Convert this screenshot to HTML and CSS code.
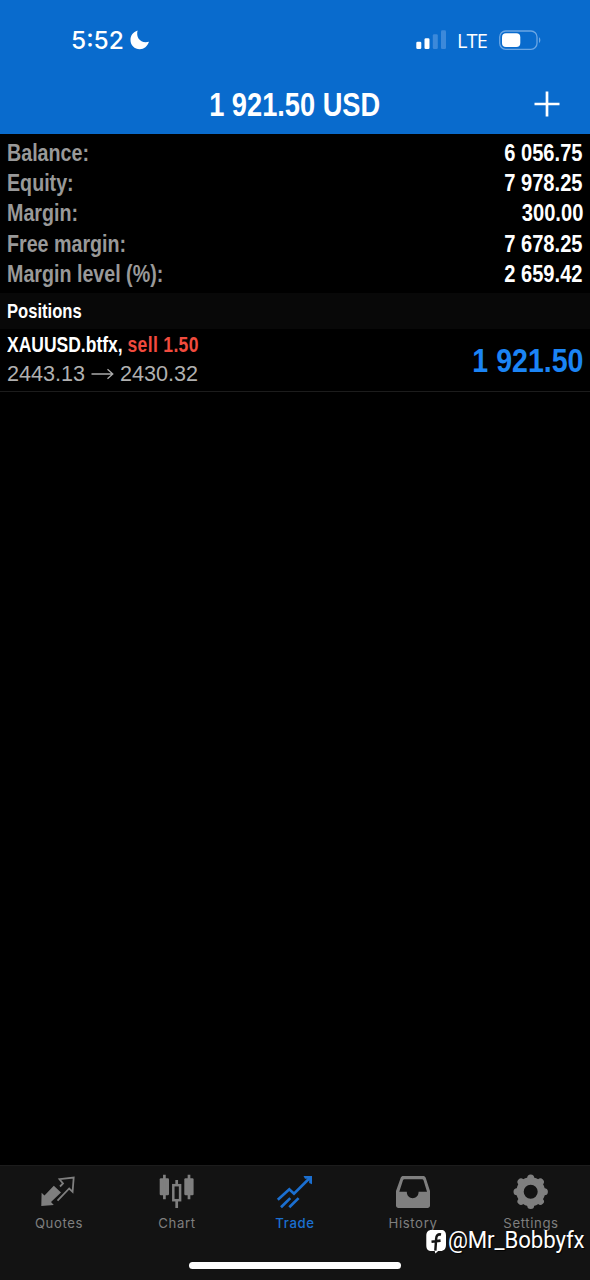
FILE: index.html
```html
<!DOCTYPE html>
<html lang="en">

<head>
  <meta charset="UTF-8">
  <meta name="viewport" content="width=device-width, initial-scale=1.0">
  <title>Trade</title>
  <link rel="stylesheet" href="styles.css">
</head>

<body>
  <header>
    <!-- Status bar -->
    <div class="status">
      <span class="time">5:52</span>
      <svg class="moon" width="20" height="20" viewBox="0 0 20 20">
        <path d="M7.6 0.6C5.6 7.9 10.8 14 19 11.8C17.5 16.3 14 19.2 9.8 19.2C4.5 19.2 0.5 15.2 0.5 10C0.5 5.6 3.2 2 7.6 0.6Z" fill="#fff" />
      </svg>
      <svg class="signal" width="31" height="20" viewBox="0 0 31 20">
        <rect x="0.3" y="11.7" width="5" height="7.3" rx="1.3" fill="#fff" />
        <rect x="8.5" y="8.3" width="5" height="10.7" rx="1.3" fill="#fff" />
        <rect x="16.8" y="4.3" width="5" height="14.7" rx="1.3" fill="#3c89da" />
        <rect x="25" y="0.3" width="5" height="18.7" rx="1.3" fill="#3c89da" />
      </svg>
      <span class="network">LTE</span>
      <svg class="battery" width="43" height="21" viewBox="0 0 43 21">
        <rect x="0.7" y="1" width="37.3" height="18.3" rx="6" fill="none" stroke="#6ba6e4" stroke-width="1.3" />
        <rect x="3" y="3.2" width="18.3" height="13.8" rx="4" fill="#fff" />
        <path d="M40 7.3C41.8 8 41.8 12.2 40 13Z" fill="#6ba6e4" />
      </svg>
    </div>

    <div class="navbar">
      <h1 class="narrow">1 921.50 USD</h1>
      <svg class="add" width="26" height="26" viewBox="0 0 26 26">
        <path d="M13 0.5V25.5M0.5 13H25.5" stroke="#fff" stroke-width="2.7" />
      </svg>
    </div>
  </header>

  <main>
    <!-- Account summary -->
    <div class="summary">
      <div class="row"><span class="narrow">Balance:</span><b class="narrow">6 056.75</b></div>
      <div class="row"><span class="narrow">Equity:</span><b class="narrow">7 978.25</b></div>
      <div class="row"><span class="narrow">Margin:</span><b class="narrow">300.00</b></div>
      <div class="row"><span class="narrow">Free margin:</span><b class="narrow">7 678.25</b></div>
      <div class="row"><span class="narrow">Margin level (%):</span><b class="narrow">2 659.42</b></div>
    </div>

    <h2><span class="narrow">Positions</span></h2>

    <div class="position">
      <div class="details">
        <div class="symbol narrow">XAUUSD.btfx, <span class="sell">sell 1.50</span></div>
        <div class="prices">
          <span>2443.13</span>
          <svg width="23" height="12" viewBox="0 0 23 12">
            <path d="M0.5 6H21.5M16.5 1.2L21.8 6L16.5 10.8" fill="none" stroke="#aaa" stroke-width="1.3" />
          </svg>
          <span>2430.32</span>
        </div>
      </div>
      <div class="profit narrow">1 921.50</div>
    </div>
  </main>

  <!-- Tab bar -->
  <nav>
    <a class="tab">
      <svg width="40" height="38" viewBox="0 0 40 38">
        <path d="M3.3 34L3.6 20.7L6.5 23.4L15.8 13.8L23 20.6L13 30.1L15.8 33Z" fill="currentColor" />
        <path d="M22 14.5L25 11.5L21.5 7.2L35.7 5.6L34.6 19.8L31.2 16.5L19.5 28.7" fill="none" stroke="currentColor" stroke-width="1.8" />
      </svg>
      <span>Quotes</span>
    </a>
    <a class="tab">
      <svg width="40" height="38" viewBox="0 0 40 38">
        <rect x="3.7" y="6.3" width="9.3" height="17" rx="1.2" fill="currentColor" />
        <rect x="28.3" y="6.3" width="9.3" height="17" rx="1.2" fill="currentColor" />
        <path d="M8.4 2.7V27.3M33 2.7V27.3M20.7 8V13M20.7 29V36" stroke="currentColor" stroke-width="2.7" />
        <rect x="17.3" y="13.2" width="6.8" height="15" fill="none" stroke="currentColor" stroke-width="2.5" />
      </svg>
      <span>Chart</span>
    </a>
    <a class="tab active">
      <svg width="40" height="38" viewBox="0 0 40 38">
        <path d="M3.8 27.8L15.3 17.3L20 21.7L36 5.7M7 35.3L16.3 26.1M15.3 35.3L24.6 26.1" fill="none" stroke="currentColor" stroke-width="2.7" />
        <path d="M29.5 4H38V12.2L35.2 11V6.8H31Z" fill="currentColor" />
      </svg>
      <span>Trade</span>
    </a>
    <a class="tab">
      <svg width="40" height="38" viewBox="0 0 40 38">
        <path fill="currentColor" fill-rule="evenodd" d="M11.5 4H31C32.4 4 33.2 4.6 33.7 5.8L38 19V33.5C38 35 37 36 35.5 36H6.5C5 36 4 35 4 33.5V19L8.7 5.8C9.2 4.6 10 4 11.5 4ZM12.3 7.2Q11.4 7.2 11 8.2L7.3 19.7H14.8C14.8 28.3 26.6 28.3 26.6 19.7H35L31.5 8.2Q31.1 7.2 30.2 7.2Z" />
      </svg>
      <span>History</span>
    </a>
    <a class="tab">
      <svg width="40" height="38" viewBox="0 0 40 38">
        <circle cx="20.7" cy="19.7" r="10.7" fill="none" stroke="currentColor" stroke-width="7.4" />
        <path d="M20.7 7V6M29.7 10.7L30.4 10M33.4 19.7H34.4M29.7 28.7L30.4 29.4M20.7 32.4V33.4M11.7 28.7L11 29.4M8 19.7H7M11.7 10.7L11 10" stroke="currentColor" stroke-width="7" stroke-linecap="round" />
      </svg>
      <span>Settings</span>
    </a>
    <div class="home-indicator"></div>
  </nav>

  <div class="watermark">
    <svg width="23" height="25" viewBox="0 0 22 24">
      <path d="M6 1H16C19.5 1 21 3 21 6V15C21 19 19 21 15.5 21H13L10.3 23.5L9.5 21H6C2.5 21 1 19 1 15.5V6.5C1 3 3 1 6 1Z" fill="#fff" />
      <path d="M16 5.3C12.5 4.7 11.2 6.5 11 9.5L10.2 20.8M6.3 12.2L15.5 11.2" fill="none" stroke="#151515" stroke-width="2.5" />
    </svg>
    <span>@Mr_Bobbyfx</span>
  </div>
</body>

</html>
```
FILE: styles.css
```css
* {
  margin: 0;
  padding: 0;
  box-sizing: border-box;
}

body {
  background-color: #000;
  color: #fff;
  font-family: "Liberation Sans", Arial, sans-serif;
  display: flex;
  flex-direction: column;
  height: 1280px;
  position: relative;
  overflow: hidden;
}

header {
  background-color: #096bcd;
  height: 134px;
}

/* condensed look of the numbers and labels */
.narrow {
  display: inline-block;
  font-weight: bold;
  white-space: nowrap;
  transform: scaleX(0.855);
  transform-origin: left center;
}

.status {
  height: 74px;
  padding: 6px 48px 0 71px;
  display: flex;
  align-items: center;
}

.time {
  font-family: Inter, sans-serif;
  font-size: 24.5px;
  font-weight: 500;
  width: 59px;
}

.signal {
  margin-left: auto;
}

.network {
  font-family: "Open Sans", sans-serif;
  font-size: 20px;
  font-weight: 500;
  letter-spacing: -0.9px;
  width: 30px;
  margin: 0 12px 0 10px;
}

.navbar {
  height: 60px;
  padding: 0 30px;
  display: grid;
  grid-template-columns: 1fr auto 1fr;
  align-items: center;
}

.navbar h1 {
  grid-column: 2;
  padding-top: 2px;
  font-size: 33px;
  transform: scaleX(0.825);
  transform-origin: center;
}

.add {
  justify-self: end;
}

main {
  flex: 1;
}

.summary {
  height: 159px;
  padding: 4px 7px 0;
  font-size: 23px;
}

.row {
  display: flex;
  justify-content: space-between;
  height: 30.2px;
  line-height: 30px;
}

.row span {
  color: #999;
}

.row b {
  transform: scaleX(0.875);
  transform-origin: right center;
}

h2 {
  background-color: #080808;
  height: 36px;
  padding: 0 7px;
  font-size: 20.5px;
  line-height: 35px;
}

h2 .narrow {
  transform: scaleX(0.81);
}

.position {
  height: 63px;
  padding: 2px 7px 0;
  display: flex;
  justify-content: space-between;
  border-bottom: 1px solid #1c1c1c;
}

.symbol {
  font-size: 22px;
  line-height: 28px;
  height: 29px;
  transform: scaleX(0.795);
}

.sell {
  color: #f14b3e;
  letter-spacing: 0.45px;
}

.prices {
  display: flex;
  align-items: center;
  gap: 6px;
  color: #b0b0b0;
  font-size: 21.6px;
  line-height: 28px;
}

.profit {
  color: #1b84f5;
  font-size: 33px;
  line-height: 59px;
  transform: scaleX(0.865);
  transform-origin: right center;
}

nav {
  background-color: #131313;
  border-top: 1px solid #1c1c1c;
  height: 115px;
  display: grid;
  grid-template-columns: repeat(5, 1fr);
  grid-template-rows: 96px auto;
}

.tab {
  padding-top: 6px;
  display: flex;
  flex-direction: column;
  align-items: center;
  gap: 5px;
  color: #7f7f7f;
  font-family: Inter, sans-serif;
  font-size: 13.2px;
  line-height: 16px;
  letter-spacing: 0.6px;
}

.tab svg {
  margin-right: 2px;
}

.active {
  color: #1b6fd0;
  font-weight: 500;
}

.home-indicator {
  grid-column: 1 / -1;
  justify-self: center;
  width: 212px;
  height: 7px;
  border-radius: 4px;
  background-color: #fff;
}

.watermark {
  position: absolute;
  right: 6px;
  bottom: 26px;
  display: flex;
  align-items: center;
  gap: 1px;
  font-family: Roboto, sans-serif;
  font-size: 23.5px;
  line-height: 28px;
  letter-spacing: -0.1px;
  text-shadow: 1px 1px 1px #000;
  transform: scaleX(0.945);
  transform-origin: right center;
}

.watermark svg {
  margin-top: 2px;
}
```
